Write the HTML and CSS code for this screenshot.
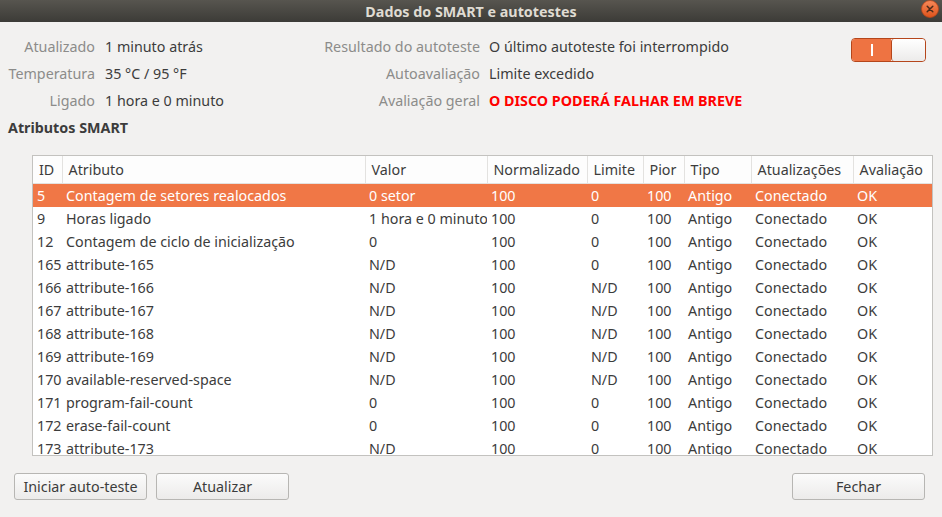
FILE: index.html
```html
<!DOCTYPE html>
<html lang="pt">
<head>
    <meta charset="UTF-8">
    <meta name="viewport" content="width=device-width, initial-scale=1.0">
    <title>Dados do SMART e autotestes</title>
    <link rel="stylesheet" href="styles.css">
</head>
<body>

    <!-- Barra de título da janela -->
    <div class="titlebar">
        <span class="title">Dados do SMART e autotestes</span>
        <span class="close">
            <svg width="18" height="18" viewBox="0 0 18 18">
                <defs>
                    <linearGradient id="gclose" x1="0" y1="0" x2="0" y2="1">
                        <stop offset="0" stop-color="#f6895a"/>
                        <stop offset="1" stop-color="#df531b"/>
                    </linearGradient>
                </defs>
                <circle cx="9" cy="9" r="8.5" fill="url(#gclose)" stroke="#b8461a" stroke-width="0.8"/>
                <path d="M6.2 6.2 L11.8 11.8 M11.8 6.2 L6.2 11.8" stroke="#4a2a1a" stroke-width="1.5" stroke-linecap="round"/>
            </svg>
        </span>
    </div>

    <div class="content">
        <div class="info">
            <div class="info-block left">
                <span class="label">Atualizado</span><span class="value">1 minuto atrás</span>
                <span class="label">Temperatura</span><span class="value">35 °C / 95 °F</span>
                <span class="label">Ligado</span><span class="value">1 hora e 0 minuto</span>
            </div>
            <div class="info-block right">
                <span class="label">Resultado do autoteste</span><span class="value">O último autoteste foi interrompido</span>
                <span class="label">Autoavaliação</span><span class="value">Limite excedido</span>
                <span class="label">Avaliação geral</span><span class="value danger">O DISCO PODERÁ FALHAR EM BREVE</span>
            </div>
            <div class="switch">
                <div class="switch-on"><span class="bar"></span></div>
                <div class="switch-knob"></div>
            </div>
        </div>

        <h3 class="section">Atributos SMART</h3>

        <div class="table-frame">
            <table class="attrs">
                <colgroup>
                    <col style="width:29px">
                    <col style="width:303px">
                    <col style="width:122px">
                    <col style="width:100px">
                    <col style="width:56px">
                    <col style="width:41px">
                    <col style="width:67px">
                    <col style="width:102px">
                    <col>
                </colgroup>
                <thead>
                    <tr>
                        <th>ID</th><th>Atributo</th><th>Valor</th><th>Normalizado</th><th>Limite</th><th>Pior</th><th>Tipo</th><th>Atualizações</th><th>Avaliação</th>
                    </tr>
                </thead>
                <tbody id="rows"></tbody>
            </table>
        </div>

        <div class="buttons">
            <button class="btn">Iniciar auto-teste</button>
            <button class="btn">Atualizar</button>
            <span class="spacer"></span>
            <button class="btn">Fechar</button>
        </div>
    </div>

    <script>
        const atributos = [
            ['5', 'Contagem de setores realocados', '0 setor', '0'],
            ['9', 'Horas ligado', '1 hora e 0 minuto', '0'],
            ['12', 'Contagem de ciclo de inicialização', '0', '0'],
            ['165', 'attribute-165', 'N/D', '0'],
            ['166', 'attribute-166', 'N/D', 'N/D'],
            ['167', 'attribute-167', 'N/D', 'N/D'],
            ['168', 'attribute-168', 'N/D', 'N/D'],
            ['169', 'attribute-169', 'N/D', 'N/D'],
            ['170', 'available-reserved-space', 'N/D', 'N/D'],
            ['171', 'program-fail-count', '0', '0'],
            ['172', 'erase-fail-count', '0', '0'],
            ['173', 'attribute-173', 'N/D', '0']
        ];

        let html = '';
        atributos.forEach(function (a, i) {
            html += `<tr${i === 0 ? ' class="selected"' : ''}>
                <td>${a[0]}</td><td>${a[1]}</td><td>${a[2]}</td><td>100</td>
                <td class="limite">${a[3]}</td><td>100</td><td>Antigo</td><td>Conectado</td><td>OK</td>
            </tr>`;
        });
        document.getElementById('rows').innerHTML = html;
    </script>

</body>
</html>
```

FILE: styles.css
```css
body {
    margin: 0;
    padding: 0;
    background-color: #f2f1f0;
    font-family: "Noto Sans", "Open Sans", sans-serif;
    font-size: 14.3px;
    color: #3c3c3c;
    overflow: hidden;
}

.titlebar {
    height: 22px;
    background: linear-gradient(#57554f, #3c3b37);
    display: flex;
    align-items: center;
    justify-content: center;
    position: relative;
}

.title {
    color: #dfdbd2;
    font-weight: bold;
    font-size: 14.3px;
}

.close {
    position: absolute;
    right: 3px;
    top: 0;
    height: 18px;
}

.content {
    padding: 11px 8px 0 8px;
}

.info {
    display: flex;
    align-items: flex-start;
}

.info-block {
    display: grid;
    grid-auto-rows: 27px;
    align-items: center;
}

.info-block.left {
    grid-template-columns: 87px 215px;
    column-gap: 10px;
}

.info-block.right {
    grid-template-columns: 160px 330px;
    column-gap: 9px;
}

.label {
    text-align: right;
    color: #8c8c8a;
    white-space: nowrap;
}

.value {
    white-space: nowrap;
}

.danger {
    color: #ff0000;
    font-weight: bold;
}

.switch {
    margin-left: auto;
    margin-top: 5px;
    margin-right: 8px;
    display: flex;
    width: 75px;
    height: 24px;
    box-sizing: border-box;
    border: 1px solid #b5461b;
    border-radius: 4px;
    overflow: hidden;
}

.switch-on {
    flex: 1;
    background-color: #ee7342;
    display: flex;
    align-items: center;
    justify-content: center;
}

.switch-on .bar {
    width: 2px;
    height: 12px;
    background-color: #fff;
}

.switch-knob {
    width: 33px;
    background: linear-gradient(#ffffff, #ecebea);
    border-left: 1px solid #b5461b;
    border-radius: 3px;
}

.section {
    margin: 5px 0 18px 0;
    font-size: 14.3px;
    line-height: 18px;
    font-weight: bold;
}

.table-frame {
    margin-left: 24px;
    margin-right: 1px;
    height: 301px;
    background-color: #fff;
    border: 1px solid #c3c2bf;
    box-sizing: border-box;
    overflow: hidden;
}

.attrs {
    border-collapse: collapse;
    table-layout: fixed;
    width: 100%;
}

.attrs th {
    height: 27px;
    padding: 0 4px 0 6px;
    text-align: left;
    font-weight: normal;
    background-color: #fdfdfd;
    border-right: 1px solid #e3e2e0;
    border-bottom: 1px solid #e3e2e0;
    white-space: nowrap;
    overflow: hidden;
}

.attrs th:last-child {
    border-right: none;
}

.attrs td {
    height: 23px;
    padding: 0 0 0 4px;
    white-space: nowrap;
    overflow: hidden;
}

.attrs tr.selected td {
    background-color: #f07746;
    color: #fff;
}

.buttons {
    display: flex;
    gap: 9px;
    margin-top: 17px;
    padding: 0 9px 0 6px;
}

.spacer {
    flex: 1;
}

.btn {
    width: 133px;
    height: 27px;
    font-family: inherit;
    font-size: 14.3px;
    color: #3c3c3c;
    background: linear-gradient(#fbfbfb, #ecebea);
    border: 1px solid #b7b6b3;
    border-radius: 3px;
    padding: 0;
}
```
